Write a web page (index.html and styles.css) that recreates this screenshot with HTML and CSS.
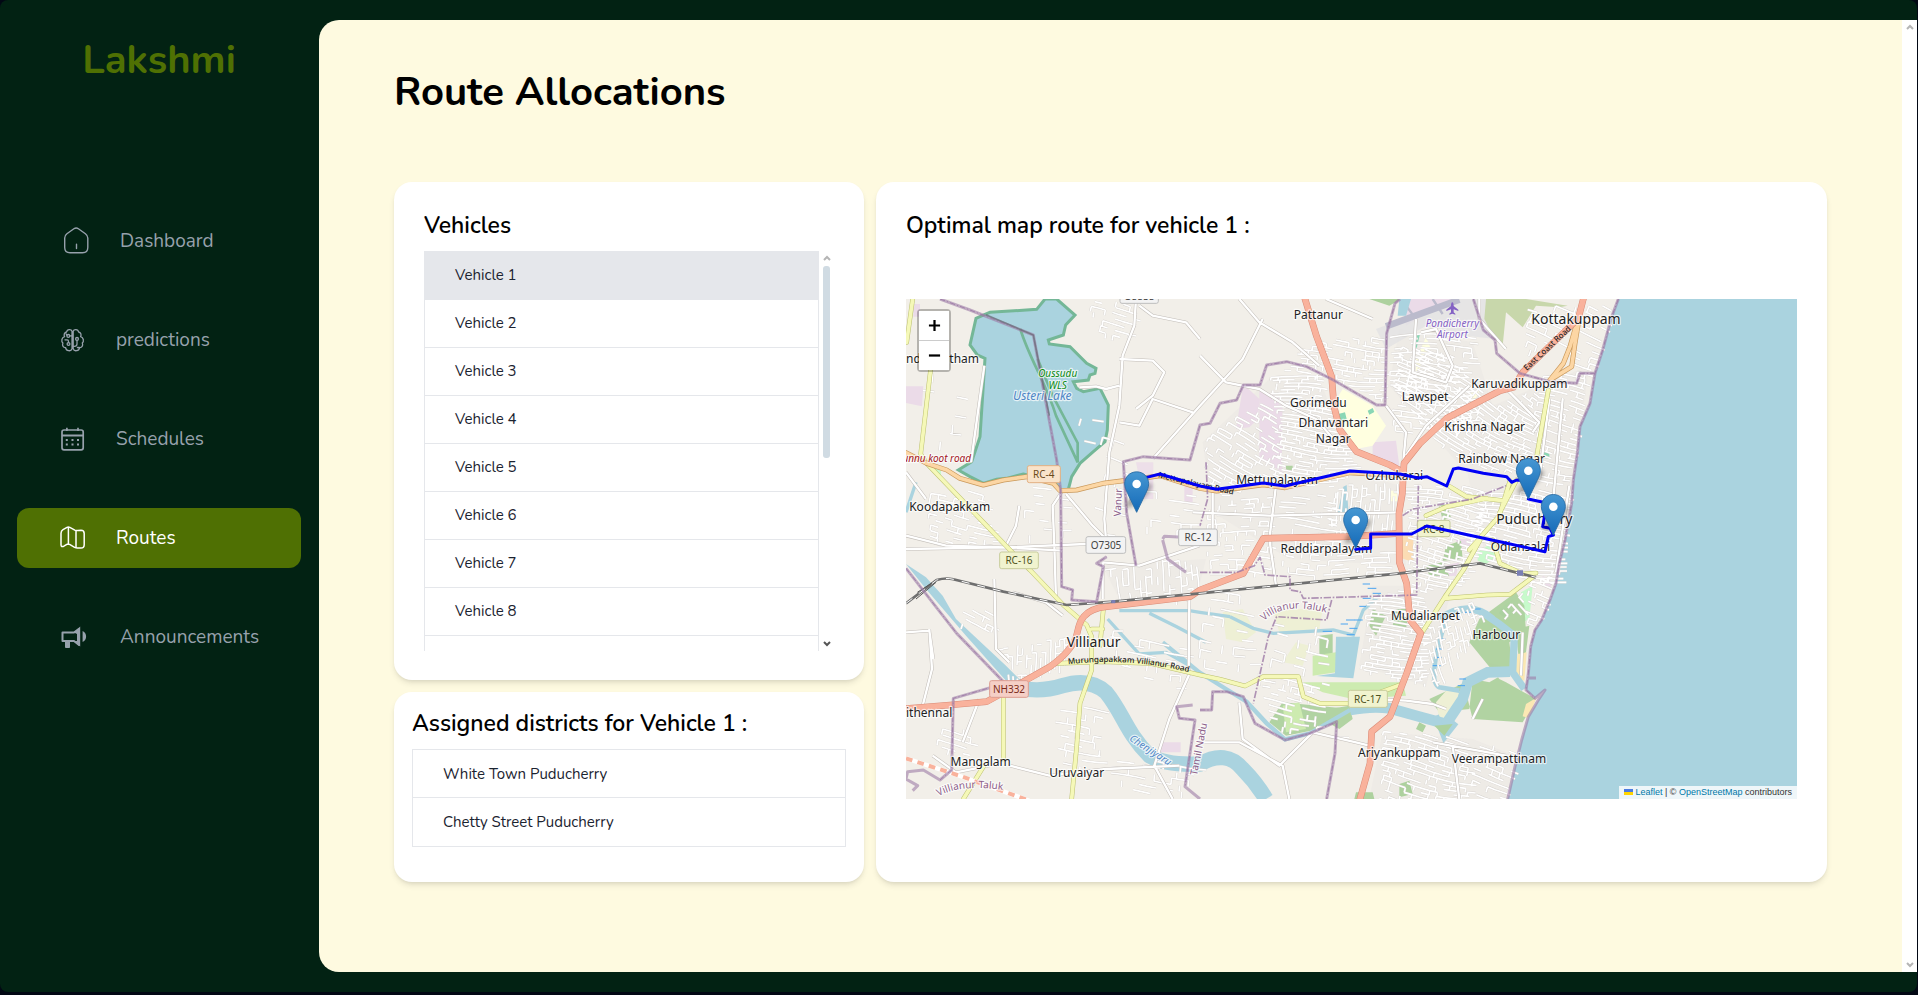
FILE: index.html
```html
<!DOCTYPE html>
<html lang="en">
<head>
<meta charset="utf-8">
<title>Route Allocations</title>
<link rel="stylesheet" href="styles.css">
</head>
<body>
<div class="app">
  <aside class="sidebar">
    <div class="brand">Lakshmi</div>
    <nav class="nav" aria-label="Main">
      <a class="nav-link" href="#dashboard">
        <svg class="icon icon-wide" viewBox="0 0 32 32" fill="none" stroke="currentColor" stroke-width="1.4" stroke-linecap="round" stroke-linejoin="round"><path d="M4.7 12.2c0-2 .6-3 2.200-4.200l7-5c1.600-1.100 3-1.100 4.500 0l7 5c1.600 1.200 2.400 2.200 2.400 4.200v9.600c0 3.400-1.900 5.200-5.200 5.200H10c-3.300 0-5.300-1.800-5.300-5.200zM16.500 18.500v4.200" transform="translate(0 .8)"/></svg>
        <span>Dashboard</span>
      </a>
      <a class="nav-link" href="#predictions">
        <svg class="icon" viewBox="0 0 28 28" fill="none" stroke="currentColor" stroke-width="1.3" stroke-linecap="round" stroke-linejoin="round"><path d="M12 5.200C11.400 3.200 7.200 2.800 6.600 6 4.300 6.300 3.600 8.600 4.600 10.600 1.600 11.400 1 15.400 2.900 17 1.800 19.800 3.500 21.900 5.600 21.600 6 25 11 26 12 22.800zM13.200 5.200C13.800 3.200 18 2.800 18.600 6c2.300.3 3 2.600 2 4.600 3 .8 3.600 4.800 1.700 6.400 1.100 2.800-.6 4.900-2.700 4.600C19.200 25 14.200 26 13.200 22.800zM12 9.900H9.800M5 13.800h2.200c1 0 1.300.6 1.300 1.600v1.200M12 20.400h2.400c2 0 2.600-.8 2.600-2.400v-3.600M12 17.500v-6M6.200 7.900l.6 1.300M17.400 21.500h2"/><circle cx="8.300" cy="9.900" r="1.400"/><circle cx="8.500" cy="18" r="1.400"/><circle cx="17" cy="12.900" r="1.400"/></svg>
        <span>predictions</span>
      </a>
      <a class="nav-link" href="#schedules">
        <svg class="icon" viewBox="0 0 28 28" fill="none" stroke="currentColor" stroke-width="1.700"><rect x="2" y="5" width="21.200" height="19.800" rx="2"/><path d="M2 10.500h21.200" stroke-width="2"/><path d="M6.900 2.800V6M18 2.800V6"/><g fill="currentColor" stroke="none"><path d="M5.800 14h2v2h-2zM11.500 14h2v2h-2zM17 14h2v2h-2zM5.800 18.600h2v2h-2zM11.500 18.600h2v2h-2zM17 18.600h2v2h-2z"/></g></svg>
        <span>Schedules</span>
      </a>
      <a class="nav-link active" href="#routes" aria-current="page">
        <svg class="icon" viewBox="0 0 28 28" fill="none" stroke="currentColor" stroke-width="1.500" stroke-linejoin="round" stroke-linecap="round"><path d="M1 9.200c0-2 .6-2.800 2-3.600L7 3.300c1-.5 1.800-.4 2.800.1l5 2.700c1 .5 1.800.5 2.800.4l3.400-.2c2.200 0 3.200 1 3.200 3.200v11.200c0 2.200-1 3.300-3.200 3.300l-3.600.1c-1 0-1.800-.2-2.800-.7l-5-3c-1-.5-1.800-.5-2.800 0l-3 1.800C2 23 1 22.600 1 20.800zM8.400 3.200v17M16 6.600v17.200"/></svg>
        <span>Routes</span>
      </a>
      <a class="nav-link" href="#announcements">
        <svg class="icon icon-wide" viewBox="0 0 32 32" fill="none" stroke="currentColor" stroke-width="2"><path d="M2.500 11.500H14l5-3.800v16.400l-5-4.100H2.500z" stroke-linejoin="round"/><path d="M14 11.500l6.200-6v19.900l-6.200-5.300h3V13z" fill="currentColor" stroke="none"/><path d="M5 20h5v6.200c0 .6-.3.800-.8.800H6c-.6 0-1-.3-1-.8zM22.600 10c2.400 1 3.500 3 3.500 5.500s-1.100 4.500-3.500 5.500z" fill="currentColor" stroke="none"/></svg>
        <span>Announcements</span>
      </a>
    </nav>
  </aside>

  <div class="page">
    <main class="content">
      <h1 class="title">Route Allocations</h1>
      <div class="cards">
        <section class="card vehicles">
          <h2 class="card-title">Vehicles</h2>
          <div class="scroller">
            <ul class="rows">
              <li><button class="row selected" type="button">Vehicle 1</button></li>
              <li><button class="row" type="button">Vehicle 2</button></li>
              <li><button class="row" type="button">Vehicle 3</button></li>
              <li><button class="row" type="button">Vehicle 4</button></li>
              <li><button class="row" type="button">Vehicle 5</button></li>
              <li><button class="row" type="button">Vehicle 6</button></li>
              <li><button class="row" type="button">Vehicle 7</button></li>
              <li><button class="row" type="button">Vehicle 8</button></li>
              <li class="cut"></li>
            </ul>
            <div class="track" aria-hidden="true">
              <svg class="arrow" viewBox="0 0 8 6"><path d="M1 5l3-3 3 3" fill="none" stroke="#b5b5b5" stroke-width="2"/></svg>
              <span class="thumb"></span>
              <svg class="arrow" viewBox="0 0 8 6"><path d="M1 1l3 3 3-3" fill="none" stroke="#555" stroke-width="2"/></svg>
            </div>
          </div>
        </section>

        <section class="card districts">
          <h2 class="card-title">Assigned districts for Vehicle 1 :</h2>
          <ul class="rows">
            <li class="row">White Town Puducherry</li>
            <li class="row">Chetty Street Puducherry</li>
          </ul>
        </section>

        <section class="card map-card">
          <h2 class="card-title">Optimal map route for vehicle 1 :</h2>
          <div class="map">
            <svg class="map-canvas" viewBox="0 0 2673 1500" preserveAspectRatio="xMidYMid slice" role="img" aria-label="Route map of Puducherry">
              <defs>
                <linearGradient id="pinFill" x1="0" y1="0" x2="0" y2="1"><stop offset="0" stop-color="#4697d2"/><stop offset="1" stop-color="#146ab8"/></linearGradient>
                <filter id="soft" x="-50%" y="-50%" width="200%" height="200%"><feGaussianBlur stdDeviation="2"/></filter>
                <g id="pin">
                  <ellipse cx="13" cy="-11" rx="17" ry="5" transform="rotate(-42)" fill="#000" opacity=".32" filter="url(#soft)"/>
                  <path d="M0-40.500c-7 0-12 5.400-12 12 0 3.200 1.500 6.600 3 9.600L0 0l9-18.900c1.500-3 3-6.400 3-9.600 0-6.600-5-12-12-12z" fill="url(#pinFill)" stroke="#2a6da6" stroke-width=".9"/>
                  <circle cy="-28.300" r="4.300" fill="#fff"/>
                </g>
                <path id="murunga" d="M487 1096Q660 1074 852 1120"/>
                <path id="talukArc" d="M1074 966Q1140 900 1290 950"/>
                <path id="talukLow" d="M98 1492Q170 1450 320 1478"/>
              </defs>

              <rect width="2673" height="1500" fill="#f2efe9"/>

              <!-- built-up areas -->
              <g fill="#ebe8e5">
                <path d="M1680 500L2000 520 1960 850 1740 780zM1480 90L1700 130 1760 320 1900 260 2050 200 2000 540 1680 520 1450 260zM1090 240H1240L1350 520 1480 560 1500 800 1150 780 920 640 890 430zM1400 860H1640L1560 1160 1360 1100zM1430 1300L1700 1320 1850 1380 1800 1500H1390zM590 800L900 780 870 900 640 900z" opacity=".6"/>
              </g>

              <!-- land use -->
              <g fill="#ebdbe8">
                <path d="M1012 255L1060 300 1056 360 1030 385 990 390zM1060 270L1130 300 1128 460 1130 520 1060 480zM1400 430L1470 425 1480 500 1400 480zM0 262L52 262 48 322 0 312zM22 15h20v38H22zM762 1330h62v30h-62zM835 560h25v50h-25zM1490 0L1640 0 1500 80zM1570 810L1660 790 1650 830 1580 835zM1650 720h42v25h-42zM1910 830L1942 850 1930 870 1905 860zM1745 1090L1785 1100 1770 1118z"/>
                <path d="M690 490h52v110h-30z" opacity=".8"/>
              </g>
              <path d="M1410 90L1650 0H1780L1770 120 1680 110 1560 80 1440 150z" fill="#e2e2e4" opacity=".8"/>
              <path d="M1440 82L1660 2" stroke="#bbbbcc" stroke-width="20"/>
              <path d="M1580 0L1610 45M1530 60L1500 20" stroke="#bbbbcc" stroke-width="7"/>
              <g fill="#ffffe0"><path d="M1292 300L1310 270 1400 320 1440 380 1400 440 1350 450 1310 380zM1535 170L1560 115 1575 150 1560 165zM1530 175L1545 180 1540 235 1530 225zM1455 575h28v32h-28zM1690 280l30-5-10 22-20 5z"/></g>
              <g fill="#c8facc"><path d="M1715 760L1760 730 1775 770 1740 795 1715 785zM1845 880L1880 860 1870 960 1850 970zM1782 930L1820 900 1815 950 1790 955zM80 510L105 510 105 530z"/></g>
              <g fill="#8ad7b5"><path d="M1522 110l20-5-10 42-12-8zM1297 345l20-5 5 20-18 8zM1385 335l15-8 5 12-15 8zM1905 460h25v18h-25zM1785 930l20 15-8 12-18-14z"/></g>
              <g fill="#add19e">
                <path d="M1620 740L1665 725 1670 780 1610 785zM1390 0H1485L1450 20zM1560 800L1610 790 1630 830 1570 830zM1470 930h40l-10 60-40-10z"/>
                <path d="M1690 1030L1720 960 1830 880 1855 920 1860 1000 1810 1030 1820 1110 1750 1150 1700 1140 1680 1180 1700 1260 1850 1270 1890 1200 1800 1150 1780 1140zM1090 1270L1130 1210 1330 1230 1240 1290 1140 1310zM1570 1200L1700 1140 1690 1230 1600 1240zM1210 1240L1330 1220 1340 1260 1300 1290zM1400 930L1440 950 1410 1010 1390 980zM1830 990L1870 980 1860 1060 1840 1090 1835 1050zM1240 1010l40-5v60h-40zM1140 500h20v15h-20zM1600 620l20-5 15 40-25 10z" opacity=".95"/>
                <path d="M1350 1480l50 0 5 20h-60zM1480 1455l30-10 10 40-40 10zM1540 1270l20 10-10 20-20-10z"/>
              </g>
              <path d="M1740 0H1860L1985 20 1960 25 1890 20 1850 85 1800 40 1790 140 1765 120 1735 60z" fill="#c8d7ab"/>
              <g fill="#cdebb0"><path d="M1190 1150H1490L1500 1190 1340 1200 1250 1180zM1130 1220l50-10 20 80-60 10zM1220 1070l70-10v60l-70 10z"/></g>
              <g fill="#eef0d5"><path d="M950 940L1010 930 1050 1000 1010 1030 960 1020zM1100 930L1250 930 1240 990 1120 1000zM1590 1210L1625 1170 1670 1180 1660 1240 1600 1260zM1170 1030l40 10-20 60-60-10z"/></g>
              <path d="M1482 700h40v90l-35-12z" fill="#fbdcb4"/>
              <path d="M1835 1065L1862 1060 1855 1145 1825 1140zM1860 1215l30-18-20 60-20-5z" fill="#fbe8b4"/>

              <!-- water -->
              <path d="M2137 0L2117 53 2090 153 2067 223 2052 313 2022 383 2014 463 2002 543 1997 613 1977 723 1960 793 1950 853 1932 903 1907 963 1887 993 1874 1043 1867 1123 1860 1173 1887 1198 1917 1173 1897 1203 1867 1253 1847 1323 1827 1403 1805 1500H2673V0z" fill="#aad3df"/>
              <g fill="#aad3df">
                <path d="M237 46L252 40 392 31 417 0H452L507 48 479 78 472 108 427 123 430 135 492 143 542 193 570 208 567 223 552 228 547 243 502 248 512 268 532 278 582 268 607 318 604 393 597 428 562 458 522 493 497 533 487 571 464 575 442 543 352 525 302 538 272 541 232 553 192 533 157 513 197 488 222 413 237 178 214 168 192 138 210 58z" stroke="#74b797" stroke-width="9"/>
                <path d="M1290 1013L1362 1013 1342 1138 1232 1131 1287 1123zM1322 558L1327 633 1312 648 1295 643 1312 563zM1475 50L1480 0H1515L1500 50zM0 795L60 835 110 890 150 960 300 1100 340 1140 370 1143 345 1175 300 1145 180 1010 60 870z"/>
              </g>
              <g fill="none" stroke="#aad3df">
                <path d="M320 1160Q390 1185 470 1160T600 1180C650 1240 660 1300 730 1370Q780 1400 882 1395Q960 1350 1010 1410 1050 1450 1080 1500" stroke-width="46"/>
                <path d="M770 1030L880 1120 960 1170 1022 1208 1082 1273 1137 1321 1212 1303 1332 1233" stroke-width="13"/>
                <path d="M1332 1233Q1400 1220 1450 1228L1540 1253 1620 1275 1670 1200 1685 1150 1745 1120 1812 1118" stroke-width="32"/>
                <path d="M1590 1250L1615 1315 1650 1270" stroke-width="18"/>
                <path d="M1735 945L1780 975 1825 1010 1820 1120 1855 1170M1600 960Q1690 900 1760 960" stroke-width="22"/>
                <path d="M1620 960Q1560 1150 1600 1165L1660 1175" stroke-width="14"/>
                <path d="M972 953L1042 988 1102 1003 1282 993 1342 1008 1372 933 1422 888M640 935H850L882 940 972 953M730 943L812 983 900 1030M605 960L650 1010 700 1065 780 1060 850 1100M0 640L30 550" stroke-width="10"/>
              </g>
              <path d="M1585 1280L1640 1275 1615 1310z" fill="#add19e"/>
              <g stroke="#4aa3f0" stroke-width="3"><path d="M1370 855h22M1385 868h26M1400 883h25M1370 898h24M1360 922h20M1320 963h26M1345 963h25M1304 975h22M1330 988h24M1250 997h28M1322 1007h24M1590 1050h18M1585 1075h22M1580 1100h24M1600 1020h18M1660 1140h20M1655 1160h22M1670 940h24M1700 930h24"/></g>
              <path d="M343 90C370 180 420 250 450 350L515 490V432L440 290 395 180" fill="none" stroke="#74b797" stroke-width="8"/>

              <!-- streets, filled by streets.js -->
              <path id="streetCase" fill="none" stroke="#d3cfcb" stroke-width="7"/>
              <path id="streetFill" fill="none" stroke="#fff" stroke-width="5"/>

              <!-- minor roads -->
              <g fill="none" stroke-linejoin="round">
                <path id="minorLines" d="M690 0L685 80 650 170 640 320 610 460 595 660 600 720M700 20L740 50 840 70 882 120M640 180L740 185 775 220 740 290 690 330M740 480L882 320 1010 180 1070 60M640 370L700 380 740 300 860 340M520 265L570 262 600 270 640 260M470 575L440 620 445 740 450 900M480 585L560 680 600 720M0 710L120 740 300 745 540 735M0 750L290 745 470 755M300 740L330 680 340 620M195 490L235 200M0 520L60 600M70 990L78 1110 50 1220M0 1000L70 995 82 1080M590 790V900M590 790L700 800 880 740M320 880L420 910 470 950M265 840L270 1050 310 1090M850 893L848 1130 790 1260 745 1400 800 1500M312 1400L430 1430 600 1410 820 1400M882 170L960 250 1060 270 1140 320 1230 360 1300 440M1000 0L1060 70 1160 130 1240 200M1260 0L1400 60M1440 320L1500 400 1489 520M1690 260L1560 380 1500 470M1720 0V60L1800 150M1530 60L1520 220 1620 250 1640 200 1590 90 1545 100M1782 250L1900 370 1880 400M1110 560L1090 720 1110 860M1350 1190L1400 1200 1500 1205 1580 1215 1620 1230M1000 1210L1010 1320 1120 1400 1220 1300 1350 1330 1390 1340M880 1330L1000 1330 1130 1400 1150 1500M1640 1340L1660 1500M1580 1330L1800 1370M1850 1000L1845 1130M1700 1260L1730 1200M80 1370L150 1420 250 1400M220 1200L170 1330M920 560V700M860 640L1090 650 1480 640M1930 300L1900 540M1970 300L1940 620M1990 560L1950 820" stroke="#c2bdb8" stroke-width="10"/>
                <path d="M690 0L685 80 650 170 640 320 610 460 595 660 600 720M700 20L740 50 840 70 882 120M640 180L740 185 775 220 740 290 690 330M740 480L882 320 1010 180 1070 60M640 370L700 380 740 300 860 340M520 265L570 262 600 270 640 260M470 575L440 620 445 740 450 900M480 585L560 680 600 720M0 710L120 740 300 745 540 735M0 750L290 745 470 755M300 740L330 680 340 620M195 490L235 200M0 520L60 600M70 990L78 1110 50 1220M0 1000L70 995 82 1080M590 790V900M590 790L700 800 880 740M320 880L420 910 470 950M265 840L270 1050 310 1090M850 893L848 1130 790 1260 745 1400 800 1500M312 1400L430 1430 600 1410 820 1400M882 170L960 250 1060 270 1140 320 1230 360 1300 440M1000 0L1060 70 1160 130 1240 200M1260 0L1400 60M1440 320L1500 400 1489 520M1690 260L1560 380 1500 470M1720 0V60L1800 150M1530 60L1520 220 1620 250 1640 200 1590 90 1545 100M1782 250L1900 370 1880 400M1110 560L1090 720 1110 860M1350 1190L1400 1200 1500 1205 1580 1215 1620 1230M1000 1210L1010 1320 1120 1400 1220 1300 1350 1330 1390 1340M880 1330L1000 1330 1130 1400 1150 1500M1640 1340L1660 1500M1580 1330L1800 1370M1850 1000L1845 1130M1700 1260L1730 1200M80 1370L150 1420 250 1400M220 1200L170 1330M920 560V700M860 640L1090 650 1480 640M1930 300L1900 540M1970 300L1940 620M1990 560L1950 820" stroke="#fff" stroke-width="7"/>
              </g>

              <!-- main roads -->
              <g fill="none" stroke-linejoin="round" stroke-linecap="round">
                <path d="M20 0L2 130M74 210L44 465 62 493 312 753 372 813 472 918 542 978 557 1013V1113L522 1213 512 1343 497 1500M592 930L582 1040M557 990H590M292 1193V1383M232 1403L172 1500M452 1093L592 1088 732 1093 882 1128 942 1141 1017 1161 1072 1133H1177L1192 1193 1242 1213H1332L1482 1158M1722 723L1672 813 1617 893 1547 1003M1617 898L1742 888 1812 886 1882 833M1927 273L1892 473M1632 563L1682 593 1792 605M1812 545L1780 650 1690 753M1560 650L1622 623 1742 598M1832 543L1780 643M1760 723L1782 793 1850 825 1890 822" stroke="#bcc070" stroke-width="14"/>
                <path d="M20 0L2 130M74 210L44 465 62 493 312 753 372 813 472 918 542 978 557 1013V1113L522 1213 512 1343 497 1500M592 930L582 1040M557 990H590M292 1193V1383M232 1403L172 1500M452 1093L592 1088 732 1093 882 1128 942 1141 1017 1161 1072 1133H1177L1192 1193 1242 1213H1332L1482 1158M1722 723L1672 813 1617 893 1547 1003M1617 898L1742 888 1812 886 1882 833M1927 273L1892 473M1632 563L1682 593 1792 605M1812 545L1780 650 1690 753M1560 650L1622 623 1742 598M1832 543L1780 643M1760 723L1782 793 1850 825 1890 822" stroke="#f5f8b8" stroke-width="11"/>
                <path d="M0 461L62 493 122 513 162 538 232 558 292 543 362 533 442 553 462 575 512 573 592 553 692 540 762 530 882 568 932 576 1072 557 1137 566 1332 521 1489 530M2012 73L1992 143 1972 193 1932 243M2017 73L2007 133 1997 203 1932 243" stroke="#c9985a" stroke-width="15"/>
                <path d="M0 461L62 493 122 513 162 538 232 558 292 543 362 533 442 553 462 575 512 573 592 553 692 540 762 530 882 568 932 576 1072 557 1137 566 1332 521 1489 530M2012 73L1992 143 1972 193 1932 243M2017 73L2007 133 1997 203 1932 243" stroke="#fcd6a4" stroke-width="11"/>
                <path d="M1197 0L1232 113 1277 233 1284 323 1302 393 1352 458 1452 498 1489 518M2032 0L2017 58 1852 218 1822 265 1782 275 1622 358 1542 433 1494 493 1489 583 1479 643 1480 790 1502 853 1512 963 1544 1003 1502 1123 1452 1253 1397 1298 1392 1393 1362 1500M1480 703L1322 713 1072 718 1012 823 882 873 852 893 602 923C530 930 520 970 514 1000Q505 1050 432 1103L352 1148 242 1208 132 1218 0 1229" stroke="#d98b77" stroke-width="20"/>
                <path d="M1197 0L1232 113 1277 233 1284 323 1302 393 1352 458 1452 498 1489 518M2032 0L2017 58 1852 218 1822 265 1782 275 1622 358 1542 433 1494 493 1489 583 1479 643 1480 790 1502 853 1512 963 1544 1003 1502 1123 1452 1253 1397 1298 1392 1393 1362 1500M1480 703L1322 713 1072 718 1012 823 882 873 852 893 602 923C530 930 520 970 514 1000Q505 1050 432 1103L352 1148 242 1208 132 1218 0 1229" stroke="#f9b29c" stroke-width="17"/>
                <path d="M0 1378L160 1430 370 1505" stroke="#fff" stroke-width="13" stroke-linecap="butt"/>
                <path d="M0 1378L160 1430 370 1505" stroke="#f9b29c" stroke-width="12" stroke-dasharray="20 16" stroke-linecap="butt"/>
              </g>

              <!-- railway -->
              <g fill="none">
                <path d="M0 913L92 843Q120 835 142 841L292 878 482 918 622 908 882 883 1082 863 1482 823 1722 793 1782 808 1842 823 1890 835" stroke="#6f6f6f" stroke-width="8"/>
                <path d="M0 913L92 843Q120 835 142 841L292 878 482 918 622 908 882 883 1082 863 1482 823 1722 793 1782 808 1842 823 1890 835" stroke="#fff" stroke-width="3" stroke-dasharray="24 24"/>
                <path d="M30 900L90 850M34 880L78 852" stroke="#555" stroke-width="3"/>
                <path d="M616 903h12v10h-12zM1833 814h18v16h-18z" fill="#7a7fb5"/>
              </g>

              <!-- boundaries -->
              <g fill="none" stroke="#9d7ba6" stroke-linejoin="round">
                <g stroke-width="9" opacity=".6"><path d="M102 0L192 33 382 108 452 483 464 573 467 863 500 873 497 903 572 908 592 803 572 793 602 773M690 800L662 643 652 488 712 473 852 483 882 378 912 373 942 313 992 303 1012 258 1062 258 1082 198 1142 188 1202 203 1282 243 1412 318H1437L1442 103 1467 13 1482 0M1702 0L1732 93 1767 123 1772 163 1842 223 1932 248 2012 253 2022 223 2067 223M2137 0L2117 53 2090 153 2067 223 2052 313 2022 383 2014 463 2002 543 1997 613 1977 723 1960 793 1950 853 1932 903 1907 963 1887 993 1874 1043 1867 1123 1860 1173 1887 1198 1917 1173 1897 1203 1867 1253 1847 1323 1827 1403 1805 1500M1867 1137H1890M0 808L152 1003 297 1153 142 1198 137 1413 102 1443 52 1413 5 1418 0 1440 35 1460 20 1475M882 1233H917L920 1178 962 1178 1012 1193 1047 1273 1137 1323 1212 1303 1292 1268 1287 1363 1262 1500M860 1218L812 1223 820 1258 867 1263 837 1463 882 1500M770 723L785 780 840 820M770 720L775 712 830 715"/></g>
                <path d="M102 0L192 33 382 108 452 483 464 573 467 863 500 873 497 903 572 908 592 803 572 793 602 773M690 800L662 643 652 488 712 473 852 483 882 378 912 373 942 313 992 303 1012 258 1062 258 1082 198 1142 188 1202 203 1282 243 1412 318H1437L1442 103 1467 13 1482 0M1702 0L1732 93 1767 123 1772 163 1842 223 1932 248 2012 253 2022 223 2067 223M2137 0L2117 53 2090 153 2067 223 2052 313 2022 383 2014 463 2002 543 1997 613 1977 723 1960 793 1950 853 1932 903 1907 963 1887 993 1874 1043 1867 1123 1860 1173 1887 1198M0 808L152 1003 297 1153 142 1198 137 1413 102 1443M882 1233H917L920 1178 962 1178 1012 1193 1047 1273 1137 1323 1212 1303 1292 1268 1287 1363 1262 1500M812 1223L820 1258 867 1263 837 1463" stroke-width="3" stroke-dasharray="16 6 4 6" opacity=".9"/>
                <path d="M882 820L992 820 1045 800 1062 775 1077 828 1152 833V873L1182 878 1192 898 1532 888 1537 560M1277 903L1262 963 1112 953 1087 1013 1042 1213M900 490L905 600 882 680M1490 650L1520 630 1700 600 1800 560" stroke-width="5" stroke-dasharray="22 5 5 5" opacity=".8"/>
              </g>
              <path d="M240 47L382 108 430 350" fill="none" stroke="#666d75" stroke-width="5" opacity=".7"/>
              <path d="M1639 10c3 0 4 6 4 11l14 11v4l-14-5v9l5 4v3l-9-3-9 3v-3l5-4v-9l-14 5v-4l14-11c0-5 1-11 4-11z" fill="#8461c4"/>

              <!-- road shields -->
              <g stroke-width="3">
                <g fill="#f9e3ca" stroke="#e3b083"><rect x="364" y="500" width="99" height="51" rx="6"/></g>
                <g fill="#f1f3cf" stroke="#c8cc9c"><rect x="281" y="759" width="116" height="50" rx="6"/><rect x="1327" y="1174" width="117" height="51" rx="6"/><rect x="1535" y="664" width="97" height="49" rx="6"/></g>
                <g fill="#f5cfc6" stroke="#dd9d90"><rect x="251" y="1145" width="116" height="50" rx="6"/></g>
                <g fill="#f3f3f3" stroke="#bdbdbd"><rect x="540" y="713" width="119" height="50" rx="6"/><rect x="818" y="690" width="116" height="50" rx="6"/><rect x="642" y="-37" width="115" height="50" rx="6"/></g>
              </g>
              <g class="shield-text">
                <text x="413" y="537" fill="#6b4a1b">RC-4</text><text x="339" y="796" fill="#4d5120">RC-16</text><text x="1385" y="1211" fill="#4d5120">RC-17</text><text x="1583" y="701" fill="#4d5120">RC-8</text><text x="309" y="1182" fill="#7b2d20">NH332</text><text x="600" y="750" fill="#444">O7305</text><text x="876" y="727" fill="#444">RC-12</text><text x="700" y="3" fill="#444">O5535</text>
              </g>

              <!-- place names -->
              <g class="place">
                <text x="1237" y="61">Pattanur</text><text x="1237" y="325">Gorimedu</text><text x="1282" y="385">Dhanvantari</text><text x="1282" y="431">Nagar</text><text x="1557" y="305">Lawspet</text><text x="1840" y="268">Karuvadikuppam</text><text x="1736" y="395">Krishna Nagar</text><text x="1787" y="492">Rainbow Nagar</text><text x="1113" y="554">Mettupalayam</text><text x="1465" y="542">Ozhukarai</text><text x="1261" y="763">Reddiarpalayam</text><text x="1843" y="757">Odiansalai</text><text x="1558" y="964">Mudaliarpet</text><text x="1771" y="1019">Harbour</text><text x="1480" y="1374">Ariyankuppam</text><text x="1779" y="1391">Veerampattinam</text><text x="224" y="1401">Mangalam</text><text x="512" y="1434">Uruvaiyar</text><text x="131" y="635">Koodapakkam</text>
                <text class="from-start" x="0" y="1253">ithennal</text><text class="from-start" x="0" y="193">nda</text><text class="to-end" x="219" y="193">atham</text>
              </g>
              <g class="place town"><text x="2010" y="75">Kottakuppam</text><text x="1885" y="675">Puducherry</text><text x="563" y="1043">Villianur</text></g>
              <g class="place slanted">
                <g class="airport"><text x="1639" y="83">Pondicherry</text><text x="1639" y="118">Airport</text></g>
                <g fill="#0c8a12"><text x="455" y="235">Oussudu</text><text x="455" y="270">WLS</text></g>
                <text class="lake" x="409" y="303" fill="#4f86c6">Usteri Lake</text>
                <text class="to-end" x="195" y="490" fill="#a3151d">unnu koot road</text>
                <text transform="translate(728 1362) rotate(33)" fill="#4f86c6">Chenjiyaru</text>
              </g>
              <g class="place area">
                <text transform="translate(646 611) rotate(-88)">Vanur</text>
                <text transform="translate(888 1352) rotate(-79)">Tamil Nadu</text>
                <text class="from-start"><textPath href="#talukArc">Villianur Taluk</textPath></text>
                <text class="from-start"><textPath href="#talukLow">Villianur Taluk</textPath></text>
              </g>
              <g class="road-name">
                <text><textPath href="#murunga">Murungapakkam Villianur Road</textPath></text>
                <text transform="translate(1862 216) rotate(-43)">East Coast Road</text>
                <text transform="translate(755 535) rotate(13)">Mettupalayam Road</text>
              </g>

              <!-- allocated route -->
              <path d="M692 540L722 535 762 525 882 561 932 571 1072 552 1137 561 1332 516 1482 525 1537 537 1562 533 1622 561 1642 510 1657 507 1732 523 1802 533 1817 550 1832 543 1862 545M1867 600L1912 610 1917 643 1910 683 1932 688 1942 708 1927 713 1917 758 1782 728 1562 681 1517 705 1394 705V748L1349 751" fill="none" stroke="#0000f5" stroke-width="9" stroke-linejoin="round" stroke-linecap="round"/>
              <use href="#pin" transform="translate(692 640) scale(3)"/>
              <use href="#pin" transform="translate(1349 748) scale(3)"/>
              <use href="#pin" transform="translate(1867 600) scale(3)"/>
              <use href="#pin" transform="translate(1942 708) scale(3)"/>
            </svg>
            <div class="zoom">
              <button type="button" aria-label="Zoom in"><svg viewBox="0 0 14 14"><path d="M7 1v12M1 7h12" stroke="#000" stroke-width="2.400"/></svg></button>
              <button type="button" aria-label="Zoom out"><svg viewBox="0 0 14 14"><path d="M1 7h12" stroke="#000" stroke-width="2.400"/></svg></button>
            </div>
            <div class="credit">
              <svg class="flag" viewBox="0 0 9 6"><path fill="#4c7be1" d="M0 0h9v3H0z"/><path fill="#ffd500" d="M0 3h9v3H0z"/></svg>
              <a href="#leaflet">Leaflet</a> | © <a href="#osm">OpenStreetMap</a> contributors
            </div>
          </div>
        </section>
      </div>
    </main>
    <div class="page-track" aria-hidden="true">
      <svg class="arrow" viewBox="0 0 8 6"><path d="M1 5l3-3 3 3" fill="none" stroke="#b5b5b5" stroke-width="2"/></svg>
      <svg class="arrow" viewBox="0 0 8 6"><path d="M1 1l3 3 3-3" fill="none" stroke="#b5b5b5" stroke-width="2"/></svg>
    </div>
  </div>
</div>
<script src="streets.js"></script>
</body>
</html>
```

FILE: styles.css
```css
* {
  box-sizing: border-box;
}

html {
  background: #020814;
}

body {
  margin: 0;
  font-family: Nunito, Lato, "Noto Sans", sans-serif;
  color: #000;
}

h1,
h2,
ul {
  margin: 0;
  padding: 0;
}

ul {
  list-style: none;
}

svg {
  display: block;
}

.app {
  display: flex;
  min-height: calc(100vh - 3px);
  margin: 0 1px 3px 0;
  padding: 20px 0;
  border-radius: 8px;
  background: #022213;
}

.sidebar {
  flex: 0 0 319px;
  padding: 16px 18px 0 17px;
}

.brand {
  margin-bottom: 127px;
  font-size: 40px;
  font-weight: 700;
  line-height: 48px;
  text-align: center;
  color: #4f7003;
}

.nav {
  display: flex;
  flex-direction: column;
  gap: 39px;
}

.nav-link {
  display: flex;
  align-items: center;
  gap: 28px;
  height: 60px;
  padding-left: 43px;
  border-radius: 12px;
  font-size: 19px;
  color: #97a1ac;
  text-decoration: none;
}

.nav-link.active {
  background: #4f7003;
  color: #fff;
}

.icon {
  width: 28px;
  height: 28px;
}

.icon-wide {
  width: 32px;
  height: 32px;
}

.page {
  flex: 1;
  display: flex;
  min-width: 0;
  border-radius: 20px 0 0 20px;
  background: #fefae0;
  overflow: hidden;
}

.content {
  flex: 1;
  min-width: 0;
  padding: 48px 75px;
}

.page-track {
  display: flex;
  flex-direction: column;
  justify-content: space-between;
  align-items: center;
  width: 15px;
  padding: 4px 0;
  background: #fff;
}

.arrow {
  width: 8px;
  height: 6px;
}

.title {
  margin-bottom: 66px;
  font-size: 40px;
  font-weight: 700;
  line-height: 48px;
}

.cards {
  display: grid;
  grid-template-columns: minmax(0, 470fr) minmax(0, 951fr);
  gap: 12px;
}

.card {
  border-radius: 18px;
  background: #fff;
  box-shadow: 0 4px 6px -1px rgba(0, 0, 0, 0.1), 0 2px 4px -2px rgba(0, 0, 0, 0.1);
}

.card-title {
  margin-bottom: 10px;
  font-size: 23px;
  font-weight: 600;
  line-height: 30px;
}

.vehicles {
  padding: 29px 30px;
}

.districts {
  padding: 17px 18px 35px;
}

.map-card {
  grid-column: 2;
  grid-row: 1 / 3;
  padding: 29px 30px;
}

.map-card .card-title {
  margin-bottom: 58px;
}

.scroller {
  display: flex;
  align-items: flex-start;
  height: 400px;
  overflow: hidden;
}

.scroller .rows {
  flex: 1;
}

.track {
  display: flex;
  flex-direction: column;
  align-items: center;
  width: 15px;
  height: 100%;
  padding: 4px 0;
}

.thumb {
  width: 7px;
  height: 192px;
  margin: 5px 0 auto;
  border-radius: 3px;
  background: #d0dbe3;
}

.rows {
  border: 1px solid #e5e7eb;
}

.row {
  display: flex;
  align-items: center;
  width: 100%;
  height: 48px;
  padding: 0 30px 2px;
  border: 0;
  border-bottom: 1px solid #e5e7eb;
  background: #fff;
  font-family: inherit;
  font-size: 15px;
  color: #1b2330;
  text-align: left;
}

.row.selected {
  background: #e5e7eb;
}

.districts .row {
  padding-bottom: 0;
}

.districts .row:last-child {
  border-bottom: 0;
}

.cut {
  height: 48px;
}

.map {
  position: relative;
  height: 500px;
  overflow: hidden;
}

.map-canvas {
  width: 100%;
  height: 100%;
}

.place {
  font-family: "Noto Sans", sans-serif;
  font-size: 36px;
  text-anchor: middle;
  stroke: rgba(255, 255, 255, 0.7);
  stroke-width: 7px;
  stroke-linejoin: round;
  paint-order: stroke;
  fill: #222;
}

.place.town {
  font-size: 42px;
}

.place.slanted {
  font-size: 30px;
  font-style: italic;
}

.place .lake {
  font-size: 36px;
}

.place.area {
  font-size: 30px;
  fill: #8d618b;
}

.place .airport {
  fill: #8461c4;
}

.place .from-start {
  text-anchor: start;
}

.place .to-end {
  text-anchor: end;
}

.shield-text {
  font-family: "Noto Sans", sans-serif;
  font-size: 30px;
  text-anchor: middle;
}

.road-name {
  font-family: "Noto Sans", sans-serif;
  font-size: 24px;
  font-weight: 500;
  fill: #222;
}

.zoom {
  position: absolute;
  top: 10px;
  left: 11px;
  border: 2px solid rgba(0, 0, 0, 0.25);
  border-radius: 4px;
  background-clip: padding-box;
}

.zoom button {
  display: grid;
  place-items: center;
  width: 30px;
  height: 29px;
  padding: 0;
  border: 0;
  background: #fff;
}

.zoom button:first-child {
  height: 30px;
  border-bottom: 1px solid #ccc;
}

.zoom svg {
  width: 13px;
  height: 13px;
}

.credit {
  position: absolute;
  right: 0;
  bottom: 0;
  padding: 0 5px;
  background: rgba(255, 255, 255, 0.8);
  font-family: "Liberation Sans", Arial, sans-serif;
  font-size: 9px;
  line-height: 13px;
  color: #333;
}

.credit a {
  color: #0078a8;
  text-decoration: none;
}

.flag {
  display: inline-block;
  width: 9px;
  height: 6px;
}
```

FILE: streets.js
```js
// Residential street grids: outline, block size, rotation in degrees, density.
const zones = [
  [[1720,560,1985,580,1960,850,1880,860,1740,780,1680,700], 22, 13, 8, 0.85],
  [[1900,230,2045,215,2010,380,1985,570,1860,540,1880,400], 24, 14, 12, 0.75],
  [[1860,20,2110,20,2060,200,1990,215,1960,130,1860,180], 30, 18, 20, 0.6],
  [[1480,140,1620,160,1760,320,1900,260,1860,520,1680,500,1560,400,1450,250], 20, 12, 30, 0.75],
  [[1445,110,1700,90,1700,400,1460,400], 26, 14, 0, 0.7],
  [[1090,230,1230,220,1300,400,1350,520,1250,560,1120,560], 22, 11, 5, 0.78],
  [[1200,130,1430,110,1430,310,1300,250,1120,220], 20, 13, 4, 0.6],
  [[900,400,1090,300,1120,560,900,580], 22, 13, 25, 0.62],
  [[1270,560,1480,550,1480,700,1280,710], 24, 13, 88, 0.7],
  [[1490,560,1720,560,1740,740,1660,860,1510,880], 22, 12, 10, 0.75],
  [[900,590,1290,580,1300,760,1470,760,1470,820,1100,840,900,830], 26, 15, 3, 0.55],
  [[1380,900,1530,860,1560,960,1560,1160,1360,1120], 22, 11, 2, 0.78],
  [[1560,990,1690,900,1740,960,1580,1180], 20, 12, 70, 0.7],
  [[1430,1290,1680,1320,1700,1500,1400,1500], 24, 13, 12, 0.7],
  [[1680,1340,1850,1340,1800,1500,1700,1500], 24, 16, 15, 0.6],
  [[600,790,900,770,870,895,640,905], 24, 16, 80, 0.6],
  [[290,1040,500,1010,480,1110,300,1150], 20, 13, 85, 0.65],
  [[600,990,840,1030,820,1180,620,1100], 30, 20, 5, 0.5],
  [[440,1230,590,1220,580,1420,440,1400], 26, 18, 5, 0.5],
  [[600,1380,880,1390,860,1480,620,1480], 26, 18, 5, 0.5],
  [[550,0,690,0,690,110,580,120], 22, 15, 10, 0.6],
  [[60,580,240,570,270,740,60,740], 24, 15, 10, 0.5],
  [[340,560,480,560,480,700,330,720], 28, 22, 0, 0.4],
  [[170,930,270,930,270,990,170,1000], 20, 15, 20, 0.65],
  [[70,1290,200,1290,200,1370,80,1350], 22, 16, 10, 0.55],
  [[1040,1120,1250,1150,1240,1290,1100,1290], 24, 16, 8, 0.6],
  [[1080,960,1280,980,1260,1110,1060,1110], 34, 24, 10, 0.4],
  [[1860,840,1950,820,1900,960,1850,980], 22, 14, 15, 0.7],
  [[882,840,1000,840,1040,1110,880,1120], 34, 24, 5, 0.45],
  [[520,330,640,430,690,600,600,720,540,600], 34, 24, 15, 0.35],
  [[700,560,900,600,880,700,720,700], 30, 20, 0, 0.45],
  [[50,180,130,180,200,420,50,450], 34, 26, 5, 0.25],
  [[1080,1310,1280,1290,1280,1340,1000,1340], 60, 40, 5, 0.2],
  [[1780,900,1860,880,1860,940,1800,960], 22, 14, 40, 0.4]
];

let seed = 7;
const random = () => {
  seed = (seed * 16807) % 2147483647;
  return seed / 2147483647;
};

const inside = (poly, x, y) => {
  let hit = false;
  for (let i = 0, j = poly.length - 2; i < poly.length; j = i, i += 2) {
    const [xi, yi, xj, yj] = [poly[i], poly[i + 1], poly[j], poly[j + 1]];
    if (yi > y !== yj > y && x < ((xj - xi) * (y - yi)) / (yj - yi) + xi) hit = !hit;
  }
  return hit;
};

let d = "";
for (const [poly, w, h, angle, density] of zones) {
  const xs = poly.filter((_, i) => i % 2 === 0);
  const ys = poly.filter((_, i) => i % 2 === 1);
  const cx = (Math.min(...xs) + Math.max(...xs)) / 2;
  const cy = (Math.min(...ys) + Math.max(...ys)) / 2;
  const reach = Math.hypot(Math.max(...xs) - cx, Math.max(...ys) - cy);
  const cos = Math.cos((angle * Math.PI) / 180);
  const sin = Math.sin((angle * Math.PI) / 180);
  const at = (u, v) => {
    const bend = 10 * Math.sin(u / 70 + v / 90);
    return [Math.round(cx + u * cos - (v + bend) * sin), Math.round(cy + u * sin + (v + bend) * cos)];
  };
  for (let v = -reach; v < reach; v += h) {
    const shift = random() * w;
    for (let u = -reach; u < reach; u += w) {
      const a = at(u + shift, v);
      if (!inside(poly, ...a)) continue;
      if (random() < density) d += `M${a}L${at(u + shift + w, v)}`;
      if (random() < density * 0.5) d += `M${a}L${at(u + shift, v + h)}`;
    }
  }
}
document.getElementById("streetCase").setAttribute("d", d);
document.getElementById("streetFill").setAttribute("d", d);
```
